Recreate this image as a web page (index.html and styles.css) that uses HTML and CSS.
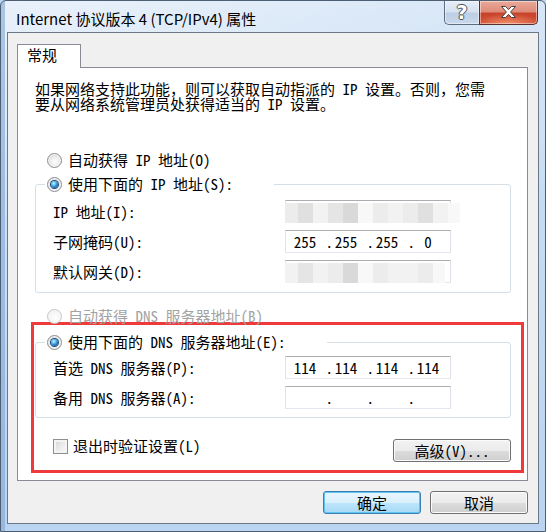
FILE: index.html
```html
<!DOCTYPE html>
<html lang="zh-CN">
<head>
<meta charset="utf-8">
<title>Internet 协议版本 4 (TCP/IPv4) 属性</title>
<link rel="stylesheet" href="styles.css">
</head>
<body>
<div class="window">
  <div class="titlebar">
    <div class="title">Internet 协议版本 4 (TCP/IPv4) 属性</div>
    <div class="caption-buttons">
      <div class="cap-btn help"><span class="help-glyph">?</span></div>
      <div class="cap-btn close">
        <svg class="close-x" width="17" height="12" viewBox="0 0 17 12"><path d="M1.5 0.5 H5.5 L8.5 3.6 L11.5 0.5 H15.5 L10.6 6 L15.5 11.5 H11.5 L8.5 8.4 L5.5 11.5 H1.5 L6.4 6 Z" fill="#fff" stroke="#414141" stroke-width="1" stroke-linejoin="round"/></svg>
      </div>
    </div>
  </div>
  <div class="client">
    <div class="tabs"><div class="tab">常规</div></div>
    <div class="panel">
      <p class="intro"><span class="intro-line">如果网络支持此功能，则可以获取自动指派的 IP 设置。否则，您需</span><span class="intro-line">要从网络系统管理员处获得适当的 IP 设置。</span></p>

      <div class="radio-row auto-ip"><span class="radio"></span><span>自动获得 IP 地址(O)</span></div>

      <fieldset class="group group-ip">
        <legend><span class="radio checked"></span><span>使用下面的 IP 地址(S):</span></legend>
        <div class="field-row">
          <span class="field-label">IP 地址(I):</span>
          <div class="ipbox">
            <div class="mask">
              <i class="blk w13 s2"></i><i class="blk s4"></i><i class="blk s1"></i><i class="blk s3"></i><i class="blk s5"></i><i class="blk s0"></i><i class="blk s2"></i><i class="blk s1"></i><i class="blk s2"></i><i class="blk s4"></i><i class="blk s1"></i><i class="blk w12 s0"></i>
            </div>
          </div>
        </div>
        <div class="field-row">
          <span class="field-label">子网掩码(U):</span>
          <div class="ipbox"><span class="oct">255</span><span class="dot">.</span><span class="oct">255</span><span class="dot">.</span><span class="oct">255</span><span class="dot">.</span><span class="oct">0</span></div>
        </div>
        <div class="field-row">
          <span class="field-label">默认网关(D):</span>
          <div class="ipbox">
            <div class="mask">
              <i class="blk w13 s1"></i><i class="blk s3"></i><i class="blk s1"></i><i class="blk s2"></i><i class="blk s5"></i><i class="blk s0"></i><i class="blk s2"></i><i class="blk s1"></i><i class="blk s1"></i><i class="blk s2"></i><i class="blk w12 s0"></i>
            </div>
          </div>
        </div>
      </fieldset>

      <div class="radio-row auto-dns disabled"><span class="radio"></span><span>自动获得 DNS 服务器地址(B)</span></div>

      <div class="highlight">
        <fieldset class="group group-dns">
          <legend><span class="radio checked"></span><span>使用下面的 DNS 服务器地址(E):</span></legend>
          <div class="field-row">
            <span class="field-label">首选 DNS 服务器(P):</span>
            <div class="ipbox"><span class="oct">114</span><span class="dot">.</span><span class="oct">114</span><span class="dot">.</span><span class="oct">114</span><span class="dot">.</span><span class="oct">114</span></div>
          </div>
          <div class="field-row">
            <span class="field-label">备用 DNS 服务器(A):</span>
            <div class="ipbox"><span class="oct"></span><span class="dot">.</span><span class="oct"></span><span class="dot">.</span><span class="oct"></span><span class="dot">.</span><span class="oct"></span></div>
          </div>
        </fieldset>
        <div class="bottom-row">
          <label class="check"><span class="checkbox"></span><span>退出时验证设置(L)</span></label>
          <button class="btn advanced" type="button">高级(V)...</button>
        </div>
      </div>
    </div>
    <div class="dialog-buttons">
      <button class="btn default" type="button">确定</button>
      <button class="btn" type="button">取消</button>
    </div>
  </div>
</div>
</body>
</html>
```
FILE: styles.css
```css
* { box-sizing: border-box; }

html, body {
  margin: 0;
  padding: 0;
}

body {
  width: 546px;
  height: 532px;
  overflow: hidden;
  background: #bcd5f1;
  font-family: "Noto Sans Mono CJK SC", "Noto Sans CJK SC", monospace;
  font-size: 15px;
  color: #000;
}

.window {
  width: 546px;
  height: 532px;
  border: 1px solid #4d5f73;
  border-radius: 6px 6px 0 0;
  padding: 0 6px 7px 6px;
  display: flex;
  flex-direction: column;
  background:
    linear-gradient(to right, rgba(120, 160, 210, 0.55) 0, rgba(120, 160, 210, 0.55) 4px, rgba(0, 0, 0, 0) 4px),
    linear-gradient(160deg, rgba(255, 255, 255, 0.55) 0, rgba(255, 255, 255, 0.15) 30%, rgba(255, 255, 255, 0) 55%),
    linear-gradient(#cfe1f5, #bad4f1);
}

/* ---------- title bar ---------- */
.titlebar {
  height: 31px;
  display: flex;
  align-items: flex-start;
}

.title {
  margin: 8px 0 0 9px;
  line-height: 20px;
  font-family: "Noto Sans CJK SC", "Open Sans", sans-serif;
  font-size: 15px;
  color: #000;
  white-space: nowrap;
}

.caption-buttons {
  margin-left: auto;
  margin-right: 1px;
  display: flex;
}

.cap-btn {
  height: 24px;
  border: 1px solid #5f6d7e;
  border-top: none;
  display: flex;
  align-items: center;
  justify-content: center;
  box-shadow: inset 0 0 0 1px rgba(255, 255, 255, 0.45);
}

.help {
  width: 35px;
  border-right: none;
  border-radius: 0 0 0 5px;
  background: linear-gradient(#e6eef8 0, #d5e1f0 48%, #bccee5 52%, #c9d8ec 100%);
}

.help-glyph {
  font-family: "DejaVu Sans", sans-serif;
  font-weight: bold;
  font-size: 19px;
  line-height: 20px;
  color: #fff;
  margin-bottom: 2px;
  text-shadow: -1px 0 0 #4f4f4f, 1px 0 0 #4f4f4f, 0 -1px 0 #4f4f4f, 0 1px 0 #4f4f4f;
}

.close {
  width: 59px;
  border-color: #5a2f2a;
  border-radius: 0 0 5px 0;
  background:
    radial-gradient(ellipse 60% 45% at 50% 100%, rgba(255, 170, 130, 0.7), rgba(255, 170, 130, 0) 100%),
    linear-gradient(#eaa898 0, #de8b7a 48%, #c8432b 52%, #cf4e33 100%);
}

.close-x {
  display: block;
  margin-bottom: 1px;
}

/* ---------- client area ---------- */
.client {
  height: 492px;
  border: 1px solid #6b7886;
  background: #f0f0f0;
  padding: 11px 10px 0 9px;
}

.tabs {
  display: flex;
  height: 23px;
}

.tab {
  position: relative;
  z-index: 1;
  width: 64px;
  height: 24px;
  padding: 0 0 0 9px;
  border: 1px solid #898c95;
  border-bottom: none;
  background: #fff;
  line-height: 20px;
}

.panel {
  width: 511px;
  border: 1px solid #898c95;
  background: #fff;
  padding: 13px 16px 7px 17px;
}

.intro {
  margin: 0;
  white-space: nowrap;
}

.intro-line {
  display: block;
  height: 15px;
  line-height: 15px;
}

/* ---------- radios ---------- */
.radio-row {
  height: 20px;
  display: flex;
  align-items: center;
  gap: 6px;
  padding-left: 12px;
  line-height: 20px;
}

.auto-ip { margin-top: 39px; }
.auto-dns { margin-top: 13px; }

.disabled { color: #a3a3a3; }

.radio {
  position: relative;
  flex: none;
  width: 15px;
  height: 15px;
  border-radius: 50%;
  border: 1px solid #8b8c8e;
  background: radial-gradient(circle at 55% 60%, #ffffff 0, #eeeeee 40%, #d4d4d4 80%, #cbcbcb 100%);
  box-shadow: inset 0 0 0 1px #f7f7f7;
}

.disabled .radio {
  border-color: #c5c5c5;
  background: radial-gradient(circle at 55% 60%, #ffffff 0, #f6f6f6 50%, #ebebeb 100%);
}

.radio.checked::after {
  content: "";
  position: absolute;
  left: 3px;
  top: 3px;
  width: 7px;
  height: 7px;
  border-radius: 50%;
  background: radial-gradient(circle at 40% 35%, #d8f3ff 0, #5ec2f2 30%, #1d6fb8 65%, #0d3a68 100%);
  box-shadow: 0 0 0 1px #204a78;
}

/* ---------- group boxes ---------- */
.group {
  margin: 4px 0 0 0;
  min-width: 0;
  border: 1px solid #d5dfe5;
  border-radius: 3px;
  padding: 6px 59px 9px 17px;
}

.group legend {
  margin-left: -8px;
  padding: 0 41px 0 2px;
  height: 20px;
  line-height: 20px;
  display: flex;
  align-items: center;
  gap: 6px;
}

.group-dns {
  margin-top: 7px;
  padding: 4px 59px 8px 17px;
}

.field-row {
  display: flex;
  align-items: center;
  height: 23px;
}

.field-row + .field-row { margin-top: 7px; }

.field-label {
  flex: 1;
  white-space: nowrap;
}

.ipbox {
  width: 166px;
  height: 23px;
  border: 1px solid;
  border-color: #abadb3 #dbdfe6 #e3e9ef #e2e3ea;
  background: #fff;
  display: flex;
  align-items: center;
  padding-left: 5px;
  white-space: pre;
}

.oct {
  flex: none;
  width: 28px;
  text-align: center;
}

.dot {
  flex: none;
  width: 14px;
  margin-right: -1px;
  text-align: right;
}

/* blurred (masked) addresses */
.mask {
  align-self: flex-start;
  display: flex;
  margin: 2px 0 0 -6px;
}

.blk {
  display: block;
  flex: none;
  width: 15px;
  height: 20px;
}

.blk.w13 { width: 13px; }
.blk.w12 { width: 12px; }
.s0 { background: #f8f8f8; }
.s1 { background: #f2f2f2; }
.s2 { background: #ececec; }
.s3 { background: #e5e5e5; }
.s4 { background: #e0e0e0; }
.s5 { background: #d9d9d9; }

/* ---------- red highlight ---------- */
.highlight {
  margin: -4px -13px 0 -4px;
  border: 3px solid #ee3a3a;
  padding: 0 10px 8px 1px;
}

.bottom-row {
  margin-top: 20px;
  display: flex;
  justify-content: space-between;
  align-items: flex-start;
}

.check {
  margin-left: 18px;
  height: 16px;
  line-height: 16px;
  display: flex;
  align-items: center;
  gap: 5px;
}

.checkbox {
  flex: none;
  width: 15px;
  height: 15px;
  border: 1px solid #8f8f8f;
  background: linear-gradient(135deg, #cfd2d6 0, #e9eaeb 50%, #fbfbfb 100%);
  box-shadow: inset 0 0 0 2px #f4f4f4;
}

/* ---------- buttons ---------- */
.btn {
  font-family: inherit;
  font-size: 15px;
  color: #000;
  height: 23px;
  padding: 0;
  border: 1px solid #707070;
  border-radius: 3px;
  line-height: 21px;
  background: linear-gradient(#f2f2f2 0, #ebebeb 50%, #dddddd 50%, #cfcfcf 100%);
  box-shadow: inset 0 0 0 1px #fbfbfb;
}

.advanced {
  width: 118px;
  margin-top: 1px;
}

.dialog-buttons {
  margin-top: 10px;
  display: flex;
  justify-content: flex-end;
  gap: 9px;
}

.dialog-buttons .btn {
  width: 98px;
}

.btn.default {
  border-color: #3c7fb1;
  background: linear-gradient(#eaf6fd 0, #d9f0fc 50%, #bee6fd 50%, #a7d9f5 100%);
  box-shadow: inset 0 0 0 1px #5fc4f1;
}
```
